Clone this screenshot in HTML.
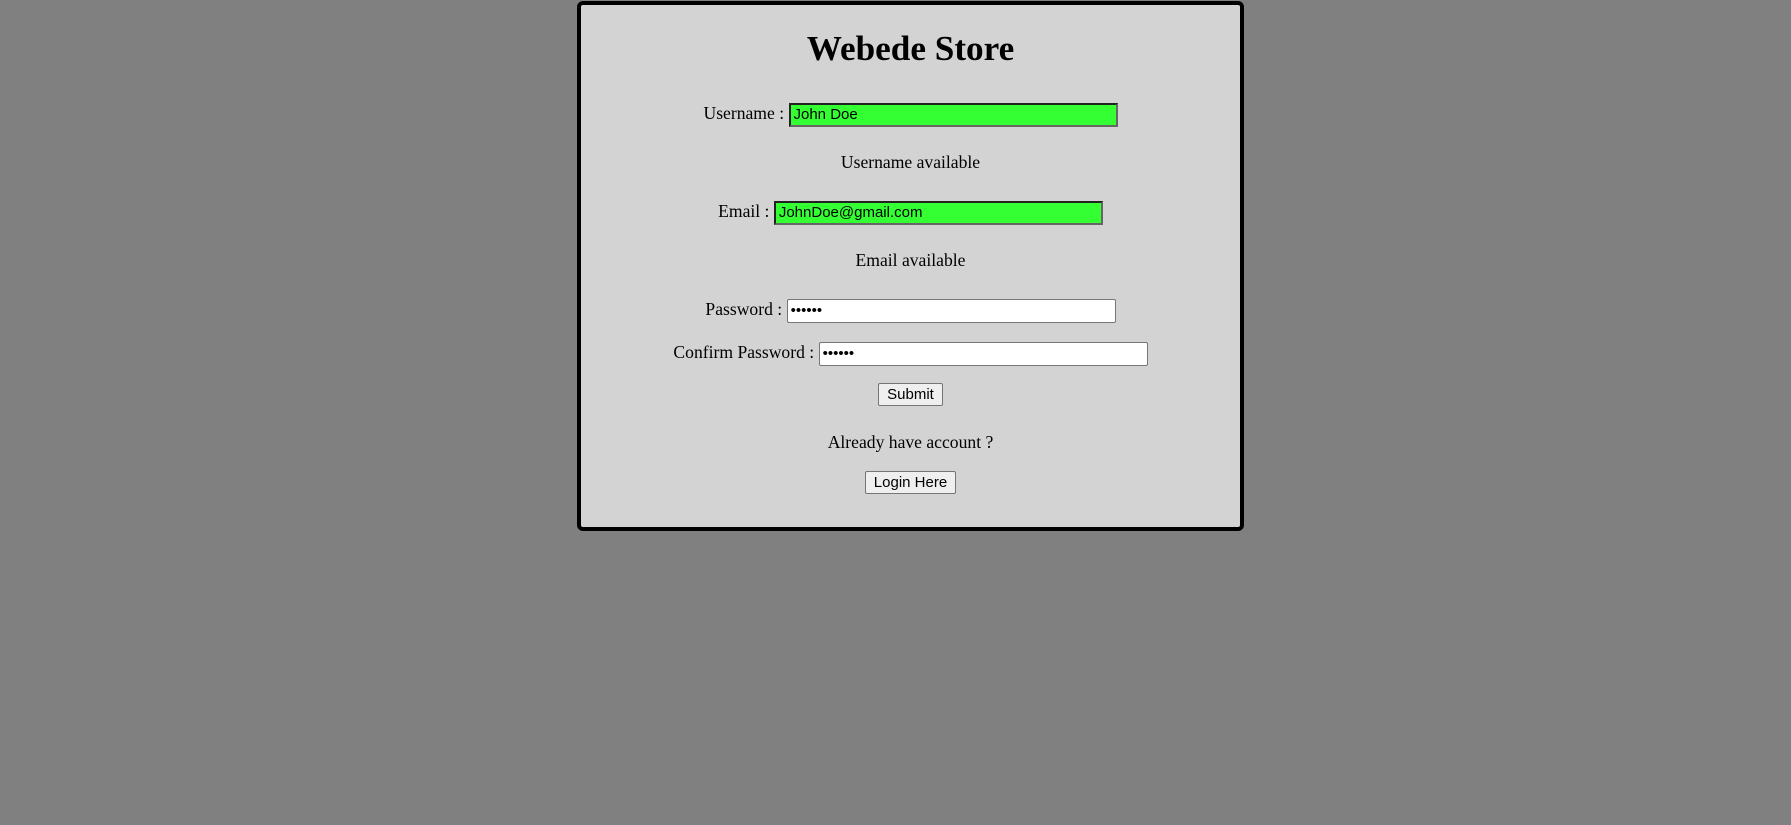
<!DOCTYPE html>
<html><head><meta charset="utf-8"><style>
html,body{margin:0;padding:0;background:#808080;width:1791px;height:825px;overflow:hidden;font-family:"Liberation Serif",serif;}
.box{position:absolute;left:577px;top:1px;width:667px;height:530px;box-sizing:border-box;border:4.5px solid #000;border-radius:6px;background:#d3d3d3;}
.row{position:absolute;left:0;right:0;text-align:center;font-size:17.6px;color:#000;height:30px;line-height:30px;white-space:nowrap}
h1{position:absolute;left:0;right:0;top:24px;margin:0;text-align:center;font-size:35.2px;line-height:40px;font-weight:bold}
input{box-sizing:border-box;width:329px;height:24px;vertical-align:middle;font-family:"Liberation Sans",sans-serif;font-size:15px;padding:0 3px;margin:0;border:1px solid #767676;border-radius:2px;background:#fff}
.g{background:#33ff33;border:2px solid #222;border-right-color:#666;border-bottom-color:#666;border-radius:0}
button{font-family:"Liberation Sans",sans-serif;font-size:15px;background:#efefef;border:1px solid #767676;border-radius:2px;padding:0 8px;height:23px;vertical-align:middle}
</style></head><body>
<div class="box">
<h1>Webede Store</h1>
<div class="row" style="top:93px">Username : <input class="g" value="John Doe"></div>
<div class="row" style="top:142px">Username available</div>
<div class="row" style="top:191px">Email : <input class="g" value="JohnDoe@gmail.com"></div>
<div class="row" style="top:240px">Email available</div>
<div class="row" style="top:289px">Password : <input value="••••••"></div>
<div class="row" style="top:332px">Confirm Password : <input value="••••••"></div>
<div class="row" style="top:373px"><button>Submit</button></div>
<div class="row" style="top:422px">Already have account ?</div>
<div class="row" style="top:461px"><button>Login Here</button></div>
</div>
</body></html>
